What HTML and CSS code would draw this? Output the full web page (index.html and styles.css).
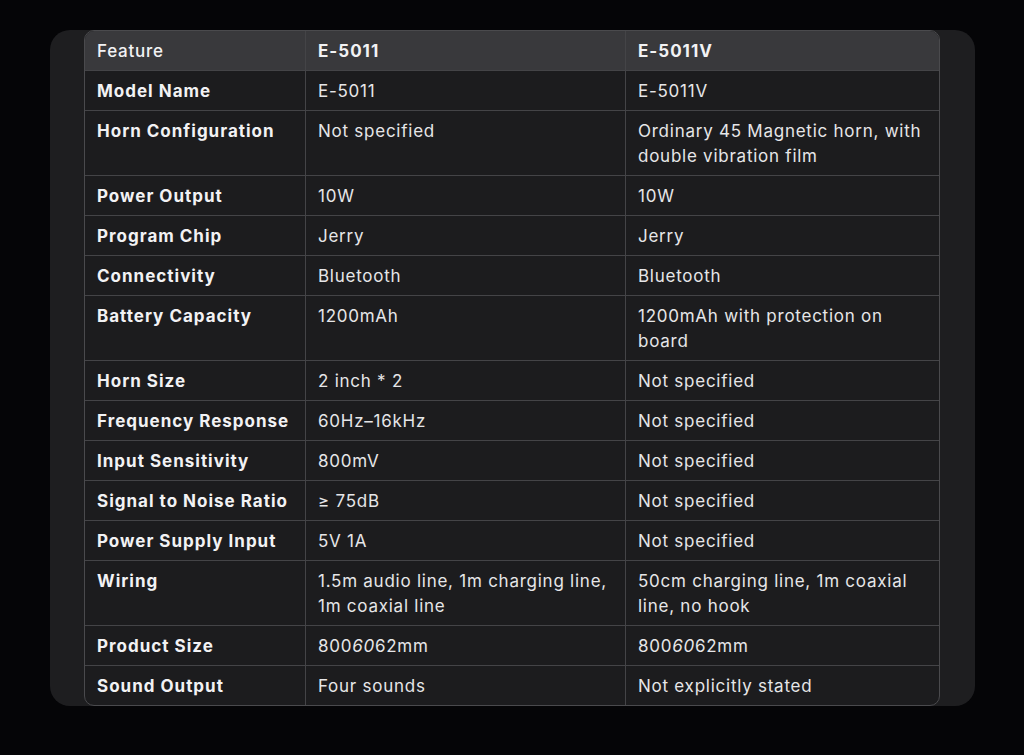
FILE: index.html
```html
<!DOCTYPE html>
<html>
<head>
<meta charset="utf-8">
<link rel="stylesheet" href="styles.css">
</head>
<body>
<div class="card">
<table class="spec">
<thead>
<tr><th class="feat">Feature</th><th>E-5011</th><th>E-5011V</th></tr>
</thead>
<tbody>
<tr><td class="lbl">Model Name</td><td>E-5011</td><td>E-5011V</td></tr>
<tr><td class="lbl">Horn Configuration</td><td>Not specified</td><td>Ordinary 45 Magnetic horn, with double vibration film</td></tr>
<tr><td class="lbl">Power Output</td><td>10W</td><td>10W</td></tr>
<tr><td class="lbl">Program Chip</td><td>Jerry</td><td>Jerry</td></tr>
<tr><td class="lbl">Connectivity</td><td>Bluetooth</td><td>Bluetooth</td></tr>
<tr><td class="lbl">Battery Capacity</td><td>1200mAh</td><td>1200mAh with protection on board</td></tr>
<tr><td class="lbl">Horn Size</td><td>2 inch * 2</td><td>Not specified</td></tr>
<tr><td class="lbl">Frequency Response</td><td>60Hz–16kHz</td><td>Not specified</td></tr>
<tr><td class="lbl">Input Sensitivity</td><td>800mV</td><td>Not specified</td></tr>
<tr><td class="lbl">Signal to Noise Ratio</td><td>≥ 75dB</td><td>Not specified</td></tr>
<tr><td class="lbl">Power Supply Input</td><td>5V 1A</td><td>Not specified</td></tr>
<tr><td class="lbl">Wiring</td><td>1.5m audio line, 1m charging line, 1m coaxial line</td><td>50cm charging line, 1m coaxial line, no hook</td></tr>
<tr><td class="lbl">Product Size</td><td>800<em>60</em>62mm</td><td>800<em>60</em>62mm</td></tr>
<tr><td class="lbl">Sound Output</td><td>Four sounds</td><td>Not explicitly stated</td></tr>
</tbody>
</table>
</div>
</body>
</html>
```

FILE: styles.css
```css
html, body {
  margin: 0;
  padding: 0;
  background: #050507;
}
body {
  padding: 30px 0 0 50px;
  font-family: "Inter", "Liberation Sans", sans-serif;
  color: #ececee;
}
.card {
  width: 856px;
  padding: 0 35px 0 34px;
  background: #1e1e20;
  border-radius: 20px;
}
.spec {
  width: 856px;
  border-collapse: separate;
  border-spacing: 0;
  border: 1px solid #4a4a4d;
  border-radius: 10px;
  overflow: hidden;
  table-layout: fixed;
  background: #1c1c1e;
  font-size: 17px;
  line-height: 25px;
  letter-spacing: 0.75px;
}
.spec th, .spec td {
  text-align: left;
  vertical-align: top;
  padding: 8px 13px 6px 12px;
  border-right: 1px solid #444447;
  border-bottom: 1px solid #444447;
}
.spec th:last-child, .spec td:last-child {
  border-right: none;
}
.spec tbody tr:last-child td {
  border-bottom: none;
}
.spec th:nth-child(1) { width: 195px; }
.spec th:nth-child(2) { width: 294px; }
.spec thead th {
  background: #39393c;
  font-weight: 700;
  color: #f2f2f4;
  letter-spacing: 1px;
}
.spec thead th.feat {
  font-weight: 500;
  letter-spacing: 0.75px;
}
.spec td {
  font-weight: 400;
  color: #e6e6e8;
}
.spec td.lbl {
  font-weight: 700;
  color: #f2f2f4;
  letter-spacing: 1px;
}
.spec em {
  font-style: italic;
}
```
